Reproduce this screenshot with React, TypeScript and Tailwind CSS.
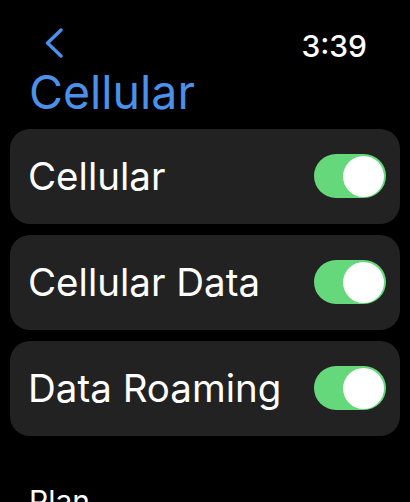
import React from "react";

function Toggle() {
  return (
    <div className="w-[72px] h-[44px] rounded-full bg-[#65d87b] flex items-center justify-end pr-[2px] shrink-0">
      <div className="w-[41px] h-[41px] rounded-full bg-white" />
    </div>
  );
}

function Row({ label }: { label: string }) {
  return (
    <div className="h-[95px] rounded-[20px] bg-[#222222] flex items-center justify-between pl-[18px] pr-[14px]">
      <span className="text-[38.5px] leading-none text-white">{label}</span>
      <Toggle />
    </div>
  );
}

export default function App() {
  return (
    <div className="w-[410px] h-[502px] overflow-hidden bg-black font-['Inter',sans-serif]">
      <div className="flex justify-between items-start pt-[28px] pl-[44px] pr-[43px]">
        <svg width="20" height="30" viewBox="0 0 20 30" fill="none">
          <path d="M17 2 L3.5 15 L17 28" stroke="#4a91ea" strokeWidth="3.4" strokeLinecap="round" strokeLinejoin="round" />
        </svg>
        <span className="mt-[3px] text-[30px] leading-none font-medium text-white">3:39</span>
      </div>
      <div className="mt-[8px] pl-[29px] text-[46.5px] leading-none text-[#4a91ea]">Cellular</div>
      <div className="mt-[13px] mx-[10px] flex flex-col gap-[11px]">
        <Row label="Cellular" />
        <Row label="Cellular Data" />
        <Row label="Data Roaming" />
      </div>
      <div className="mt-[50px] pl-[29px] text-[30px] leading-none text-white">Plan</div>
    </div>
  );
}
